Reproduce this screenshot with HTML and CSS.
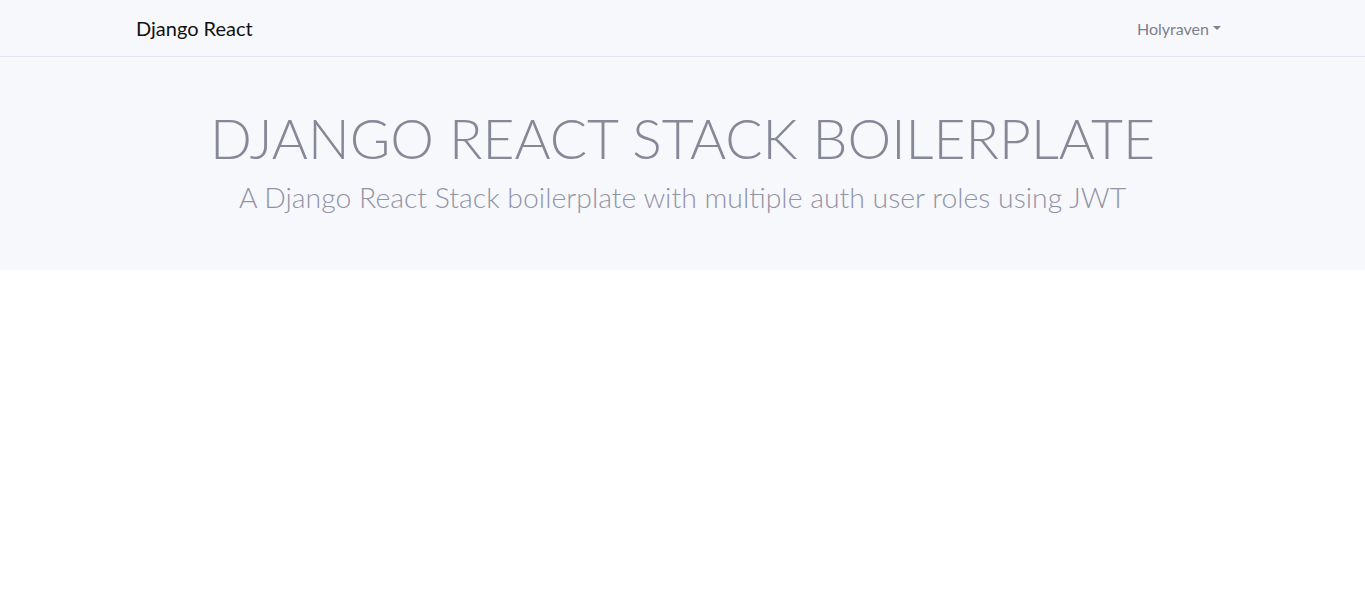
FILE: index.html
```html
<!DOCTYPE html>
<html lang="en">
<head>
<meta charset="utf-8">
<title>Django React</title>
<link rel="stylesheet" href="styles.css">
</head>
<body>
<nav class="navbar">
  <div class="container nav-inner">
    <a class="brand" href="#">Django React</a>
    <a class="nav-link" href="#">Holyraven<span class="caret"></span></a>
  </div>
</nav>
<header class="jumbotron">
  <h1 class="display">DJANGO REACT STACK BOILERPLATE</h1>
  <p class="lead">A Django React Stack boilerplate with multiple auth user roles using JWT</p>
</header>
</body>
</html>
```

FILE: styles.css
```css
* { box-sizing: border-box; }
html, body { margin: 0; padding: 0; }
body {
  font-family: Lato, "Open Sans", sans-serif;
  background: #ffffff;
  color: #212529;
}
.navbar {
  background: #f7f8fc;
  border-bottom: 1px solid #e3e4ef;
  height: 57px;
  display: flex;
  align-items: center;
}
.container {
  width: 1093px;
  margin: 0 auto;
}
.nav-inner {
  display: flex;
  justify-content: space-between;
  align-items: center;
}
.brand {
  font-size: 20px;
  color: #111111;
  text-decoration: none;
  line-height: 30px;
}
.nav-link {
  font-size: 16px;
  color: #7d808e;
  text-decoration: none;
  padding: 8px 8px;
  display: flex;
  align-items: center;
}
.caret {
  display: inline-block;
  margin-left: 4px;
  width: 0;
  height: 0;
  border-top: 4px solid #7d808e;
  border-left: 4px solid transparent;
  border-right: 4px solid transparent;
}
.jumbotron {
  background: #f7f8fc;
  height: 213px;
  text-align: center;
  padding-top: 48px;
}
.display {
  margin: 0;
  font-size: 55.2px;
  font-weight: 300;
  line-height: 1.2;
  color: #868897;
}
.lead {
  margin: 9px 0 0;
  font-size: 28.4px;
  font-weight: 300;
  color: #9294a6;
}
```
